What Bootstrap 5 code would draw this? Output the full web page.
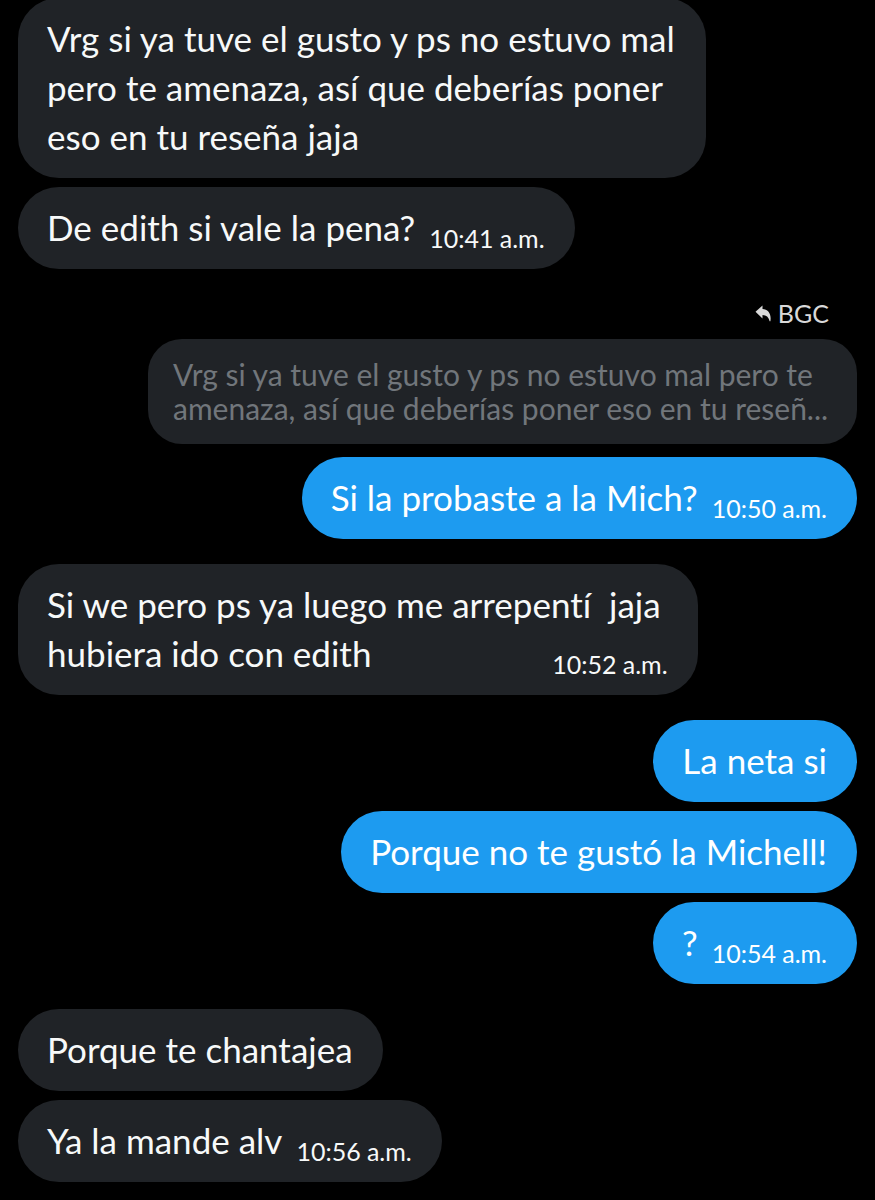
<!DOCTYPE html>
<html lang="es" data-bs-theme="dark">
<head>
<meta charset="utf-8">
<meta name="viewport" content="width=device-width, initial-scale=1">
<title>Mensajes</title>
<link href="https://cdn.jsdelivr.net/npm/bootstrap@5.3.0/dist/css/bootstrap.min.css" rel="stylesheet">
<style>
  body { background: #000; font-family: Lato, "Open Sans", sans-serif; font-variant-ligatures: none; color: #f7f9f9; }
  .thread { padding: 0 18px 18px; gap: 25px; margin-top: -2px; }
  .turn { gap: 9px; }
  .bubble {
    max-width: 82%;
    margin: 0;
    padding: 16px 30px 17px 29px;
    border-radius: 41px;
    background: #202327;
    font-size: 35px;
    line-height: 49px;
  }
  .bubble.narrower { width: 81%; }
  .sent .bubble { background: #1d9bf0; color: #fff; }
  .stamp { margin-left: 14px; padding-top: 21px; font-size: 25px; line-height: 28px; white-space: nowrap; }
  .reply-to { padding: 3px 28px 1px 0; gap: 6px; font-size: 25px; line-height: 32px; color: #d9d9d9; }
  .quoted {
    max-width: 709px;
    margin-bottom: 4px;
    padding: 18px 25px 19px;
    border-radius: 34px;
    background: #202327;
    color: #71767b;
    font-size: 30px;
    line-height: 34px;
  }
</style>
</head>
<body>
<main class="thread d-flex flex-column">
  <section class="turn d-flex flex-column align-items-start">
    <p class="bubble">Vrg si ya tuve el gusto y ps no estuvo mal pero te amenaza, así que deberías poner eso en tu reseña jaja</p>
    <p class="bubble">De edith si vale la pena? <time class="stamp float-end">10:41&#8239;a.m.</time></p>
  </section>

  <section class="turn sent d-flex flex-column align-items-end">
    <div class="reply-to d-flex align-items-center">
      <svg width="17" height="17" viewBox="0 0 17 17" fill="currentColor" aria-hidden="true"><path d="M0.5 6.8 7.5 0.6V4C13 4.4 16.6 8.4 15.4 16.2H14.6C13.6 12 11.4 10 7.5 9.9V13.4Z"/></svg>
      <span>BGC</span>
    </div>
    <blockquote class="quoted">Vrg si ya tuve el gusto y ps no estuvo mal pero te amenaza, así que deberías poner eso en tu reseñ...</blockquote>
    <p class="bubble">Si la probaste a la Mich? <time class="stamp float-end">10:50&#8239;a.m.</time></p>
  </section>

  <section class="turn d-flex flex-column align-items-start">
    <p class="bubble narrower">
      <span class="d-block">Si we pero ps ya luego me arrepentí&nbsp; jaja</span>
      <span class="d-flex justify-content-between"><span>hubiera ido con edith</span> <time class="stamp">10:52&#8239;a.m.</time></span>
    </p>
  </section>

  <section class="turn sent d-flex flex-column align-items-end">
    <p class="bubble">La neta si</p>
    <p class="bubble">Porque no te gustó la Michell!</p>
    <p class="bubble">? <time class="stamp float-end">10:54&#8239;a.m.</time></p>
  </section>

  <section class="turn d-flex flex-column align-items-start">
    <p class="bubble">Porque te chantajea</p>
    <p class="bubble">Ya la mande alv <time class="stamp float-end">10:56&#8239;a.m.</time></p>
  </section>
</main>
<script src="https://cdn.jsdelivr.net/npm/bootstrap@5.3.0/dist/js/bootstrap.bundle.min.js"></script>
</body>
</html>
